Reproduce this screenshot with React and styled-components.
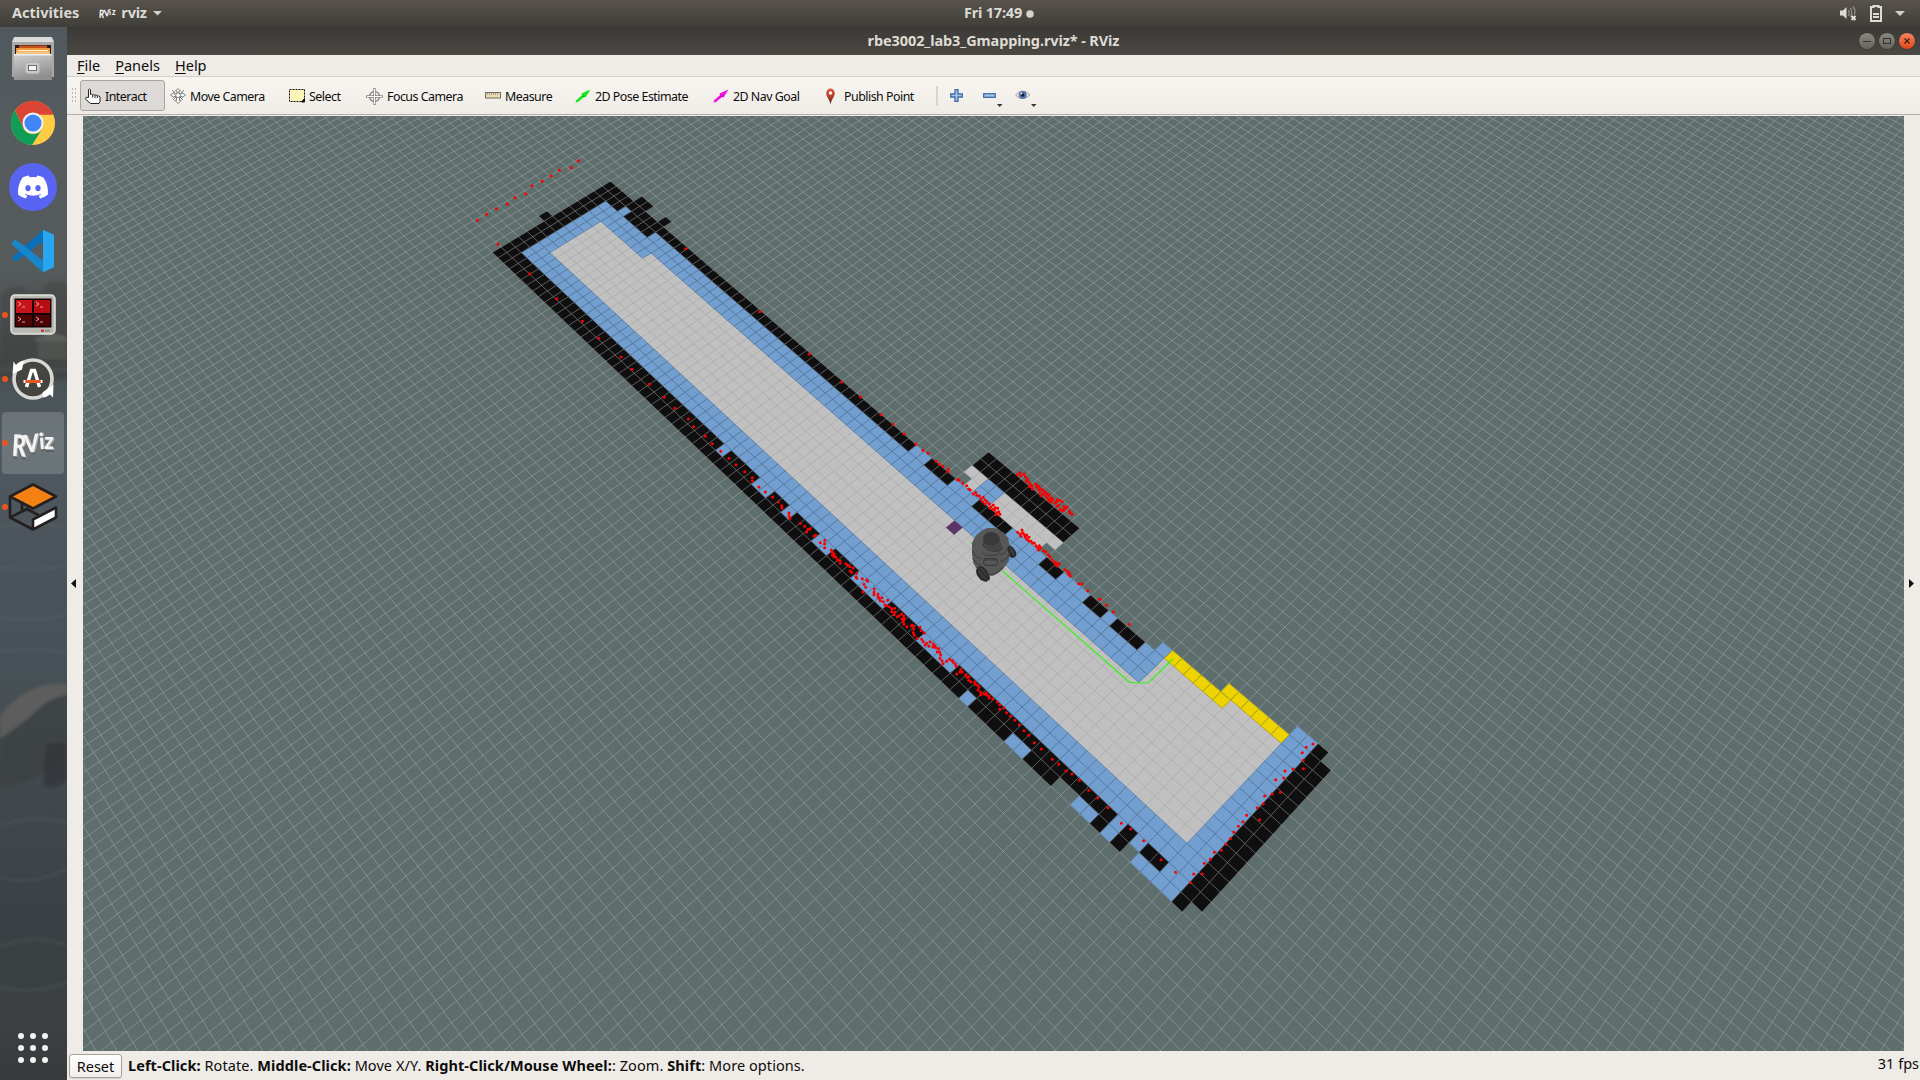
import React from "react";
import styled, { createGlobalStyle } from "styled-components";

/* ------------------------------------------------------------------ */
/* Ground plane camera                                                  */
/* ------------------------------------------------------------------ */

const VIEW = { x: 83, y: 116, w: 1821, h: 935 };
const CAM = {
  pitch: 1.07464,
  yaw: 0.792847,
  cell: 0.010761,
  ox: -0.420432,
  oy: 0.502174,
  f: 1128.854,
  cx: 993.5,
  cy: 583.5,
};

// map cell (u along the corridor, v across it) -> screen
const project = (u, v) => {
  const { pitch, yaw, cell, ox, oy, f, cx, cy } = CAM;
  const r = ox + cell * (u * Math.cos(yaw) - v * Math.sin(yaw));
  const d = oy + cell * (-u * Math.sin(yaw) - v * Math.cos(yaw));
  const w = 1 + d * Math.cos(pitch);
  return [cx + (f * r) / w, cy - (f * d * Math.sin(pitch)) / w];
};

// screen -> map cell
const unproject = (x, y) => {
  const { pitch, yaw, cell, ox, oy, f, cx, cy } = CAM;
  const X = x - cx;
  const Y = y - cy;
  const d = -Y / (f * Math.sin(pitch) + Y * Math.cos(pitch));
  const r = (X * (1 + d * Math.cos(pitch))) / f;
  const a = (r - ox) / cell;
  const b = (d - oy) / cell;
  return [
    a * Math.cos(yaw) - b * Math.sin(yaw),
    -a * Math.sin(yaw) - b * Math.cos(yaw),
  ];
};

const n1 = (n) => n.toFixed(1);

const edges = [
  [[VIEW.x, VIEW.y], [VIEW.x + VIEW.w, VIEW.y]],
  [[VIEW.x + VIEW.w, VIEW.y], [VIEW.x + VIEW.w, VIEW.y + VIEW.h]],
  [[VIEW.x + VIEW.w, VIEW.y + VIEW.h], [VIEW.x, VIEW.y + VIEW.h]],
  [[VIEW.x, VIEW.y + VIEW.h], [VIEW.x, VIEW.y]],
];

// crossing of a grid line (axis 0: u = k, axis 1: v = k) with the view border
const crossings = (axis, k) => {
  const hits = [];
  edges.forEach(([a, b]) => {
    const g = (t) =>
      unproject(a[0] + (b[0] - a[0]) * t, a[1] + (b[1] - a[1]) * t)[axis] - k;
    let lo = 0;
    let hi = 1;
    const gl = g(0);
    if (gl * g(1) > 0) return;
    for (let i = 0; i < 28; i++) {
      const m = (lo + hi) / 2;
      if (g(m) * gl > 0) lo = m;
      else hi = m;
    }
    hits.push([a[0] + (b[0] - a[0]) * lo, a[1] + (b[1] - a[1]) * lo]);
  });
  return hits;
};

const gridPath = (() => {
  let d = "";
  [[0, -48, 130], [1, -104, 74]].forEach(([axis, from, to]) => {
    for (let k = from; k <= to; k++) {
      const h = crossings(axis, k);
      if (h.length >= 2) {
        d += `M${n1(h[0][0])} ${n1(h[0][1])}L${n1(h[1][0])} ${n1(h[1][1])}`;
      }
    }
  });
  return d;
})();

// [u0, u1, v0, v1]
const cells = (list) =>
  list
    .map(([u0, u1, v0, v1]) =>
      "M" +
      [[u0, v0], [u1, v0], [u1, v1], [u0, v1]]
        .map(([u, v]) => project(u, v).map(n1).join(" "))
        .join("L") +
      "Z"
    )
    .join("");

const FREE = cells([
  [4, 86, 4, 10], [11, 86, 3, 4], [75, 86, 0, 3], [81, 86, -1, 0],
  [51, 53, -2, -1], [52, 53, -1, 0], [55, 62, -2, -1], [55, 61, -1, 0],
]);
const INFLATED = cells([
  [2, 4, 2, 12], [4, 11, 2, 4], [4, 5, 1, 2], [9, 11, 1, 2], [11, 75, 1, 3],
  [4, 88, 10, 12],
  [46, 48, 0, 1], [51, 54, 0, 1], [58, 62, 0, 1], [64, 67, 0, 1],
  [69, 70, 0, 1], [73, 75, 0, 1], [74, 75, -1, 0],
  [53, 55, -2, 0],
  [86, 88, -3, 14],
  [34, 35, 12, 13], [39, 41, 12, 13], [43, 44, 12, 13], [47, 49, 12, 13],
  [52, 56, 12, 13], [60, 64, 12, 13], [81, 82, 12, 13], [83, 84, 12, 13],
  [66, 67, 13, 14], [71, 73, 13, 14], [78, 80, 13, 14], [81, 82, 13, 14],
  [84, 86, 13, 14],
]);
const WALL = cells([
  [0, 2, 0, 14], [2, 4, 0, 2], [4, 46, 0, 1], [5, 9, 1, 2],
  [4, 6, -1, 0], [8, 9, -1, 0], [-1, 0, 7, 8],
  [2, 66, 13, 14], [2, 34, 12, 13], [35, 39, 12, 13], [41, 43, 12, 13],
  [44, 47, 12, 13], [49, 52, 12, 13], [56, 60, 12, 13], [64, 81, 12, 13],
  [67, 71, 13, 14], [73, 76, 13, 14], [80, 81, 13, 14],
  [82, 83, 12, 14], [84, 86, 12, 13],
  [48, 51, 0, 1], [54, 58, 0, 1], [62, 64, 0, 1], [67, 69, 0, 1],
  [70, 73, 0, 1],
  [51, 62, -4, -2],
  [88, 89, -3, 14], [89, 90, -2, 13],
]);
const FRONTIER = cells([[75, 81, -1, 0], [80, 86, -2, -1]]);
const TARGET = cells([[54, 55, 3, 4]]);

/* ------------------------------------------------------------------ */
/* Laser scan points: [origin x, origin y, "x y x y ..." in 1/3 px]     */
/* ------------------------------------------------------------------ */

const SCAN = [
  [460, 120, "52 301 80 283 109 266 142 253 165 233 198 221 216 197 247 184 273 168 298 151 334 143 355 122 114 373 210 461 290 536 367 604 416 655 483 711 516 748 568 793 613 832 645 865 685 897 701 920 736 949 677 386 899 575 1047 703 1145 786"],
  [700, 380, "425 6 482 51 543 104 579 133 613 162 647 193 669 211 684 220 708 244 718 253 729 259 745 268 744 275 772 299 777 301 788 310 800 317 806 327 811 330 820 342 827 337 830 346 838 348 843 357 850 352 848 365 856 360 862 366 868 372 873 380 880 375 886 383 890 398 884 391 893 385 900 403 870 385 855 372 880 388 888 404 896 395"],
  [940, 430, "232 134 240 128 243 137 252 132 256 140 262 147 259 153 266 156 271 163 269 170 277 178 276 169 286 162 291 166 290 172 297 170 297 179 304 178 300 188 309 181 303 198 310 192 316 186 318 198 322 192 322 204 328 196 330 207 327 212 335 204 333 216 339 209 345 219 352 209 350 216 360 211 367 215 356 226 350 229 372 229 361 239 366 241 374 236 370 243 381 232 388 243 391 249 396 253"],
  [700, 380, "953 457 960 462 966 450 968 458 963 469 972 463 976 470 980 465 980 477 987 472 986 482 993 484 998 490 1003 489 1008 497 1013 504 1018 497 1022 503 1016 510 1030 512 1037 515 1045 524 1050 530 1056 540 1064 546 1068 552 1074 549 1078 552 1070 558 1095 569 1103 574 1108 580 1111 588 1106 583 1136 611 1146 612 1163 632 1198 658"],
  [1050, 580, "151 58 169 76 190 96 238 133"],
  [700, 380, "15 168 37 191 62 214 87 235 108 254 134 275 157 293 157 303 177 321 196 336 218 351 235 366 245 377 246 384 267 399 267 408 270 415 301 430 314 439 324 448 330 447 320 456 342 468 347 466 361 488 374 481 374 491 374 503 394 510 397 516 397 525 403 522 408 532 402 530 413 540 420 542 421 550 438 551 443 556 450 560 460 564 450 573 455 577 470 580 468 590 470 595 487 596 500 600 503 604 492 613 497 622 489 636 523 627 522 637 522 644 534 642 534 650 537 655 546 653 541 662 550 665 563 661 555 675 560 677 568 680 575 687 584 685 575 695 585 697 582 704 592 710 597 707 605 702 612 709 606 717 613 717 610 725 612 733 621 740 637 735 641 739 634 738 660 742 641 748 664 752 640 758 673 759 643 766 652 775 665 778 670 785 690 785 680 790 687 799 675 795 700 792 705 797 708 803 699 801 716 806 712 815 719 817 722 825 720 835 726 842 729 851 740 844 749 838 757 842 760 847 766 853 769 859 782 868 780 876 787 876 770 882 797 884 801 892 807 890 806 901 813 906 824 905 825 913 833 916 837 922 834 930 842 936 842 944 852 942 859 939 860 945 867 948 868 954 878 957 892 966 900 975 899 988 912 984 920 998 931 1009 944 1021 958 1034 972 1052 986 1066 1003 1088 1024 1107"],
  [1050, 580, "7 538 26 553 48 573 66 582 88 601 116 631 143 654 174 683 214 730 242 747 281 782 333 839 377 877 789 492 769 502 757 518 760 541 760 566 729 567 705 573 701 594 677 599 691 637 666 642 644 648 640 671 622 683 629 719 590 706 579 725 565 739 551 756 541 776 528 793 514 811 493 817 481 838 463 850 457 882 431 882 422 908"],
];

const scanPath = SCAN.map(([ox, oy, s]) => {
  const n = s.split(" ").map(Number);
  let d = "";
  for (let i = 0; i < n.length; i += 2) {
    d += `M${n1(ox + n[i] / 3)} ${n1(oy + n[i + 1] / 3)}h0`;
  }
  return d;
}).join("");

/* ------------------------------------------------------------------ */
/* Styles                                                               */
/* ------------------------------------------------------------------ */

const GlobalStyle = createGlobalStyle`
  * { box-sizing: border-box; }
  body { margin: 0; overflow: hidden; background: #efebe7; }
`;

const Desktop = styled.div`
  width: 1920px;
  height: 1080px;
  display: flex;
  flex-direction: column;
  font-family: "Noto Sans", "Open Sans", sans-serif;
  font-size: 14.5px;
  color: #0c0c0c;
`;

const TopBar = styled.header`
  height: 27px;
  flex: none;
  display: grid;
  grid-template-columns: 1fr auto 1fr;
  align-items: center;
  background: linear-gradient(#58534c, #3f3e39);
  color: #dcdad5;
  font-weight: 700;
`;

const BarGroup = styled.div`
  display: flex;
  align-items: center;
  height: 27px;
  gap: ${(p) => p.$gap || 0}px;
  justify-content: ${(p) => (p.$end ? "flex-end" : "flex-start")};
  padding: ${(p) => p.$pad || "0"};
`;

const BarText = styled.span`
  line-height: 24px;
  padding-bottom: 3px;
  letter-spacing: ${(p) => p.$ls || 0}px;
`;

const Body = styled.div`
  flex: 1;
  min-height: 0;
  display: flex;
`;

const Dock = styled.nav`
  position: relative;
  width: 67px;
  flex: none;
  display: flex;
  flex-direction: column;
  overflow: hidden;
  background: linear-gradient(
    #50595e 0,
    #565c5e 130px,
    #555a5b 240px,
    #4f5353 290px,
    #444947 335px,
    #4a5357 362px,
    #505a60 410px,
    #4b545a 520px,
    #485157 640px,
    #42494c 760px,
    #3a4043 900px,
    #3c4042 1000px,
    #373a3b 1053px
  );
`;

const DockScene = styled.svg`
  position: absolute;
  left: 0;
  top: 0;
`;

const DockItem = styled.div`
  position: relative;
  height: 64px;
  flex: none;
  display: flex;
  align-items: center;
  padding-left: 2px;
`;

const DockTile = styled.div`
  width: 62px;
  height: 62px;
  display: flex;
  align-items: center;
  justify-content: center;
  border-radius: 4px;
  background: ${(p) => (p.$active ? "rgba(255,255,255,0.17)" : "transparent")};
`;

const RunDot = styled.span`
  position: absolute;
  left: 2px;
  top: 29px;
  width: 6px;
  height: 6px;
  border-radius: 50%;
  background: #e95420;
`;

const AppGrid = styled.div`
  position: relative;
  margin-top: auto;
  padding: 0 0 17px 18px;
  display: grid;
  grid-template-columns: repeat(3, 6px);
  gap: 6px;
`;

const GridDot = styled.i`
  width: 6px;
  height: 6px;
  border-radius: 50%;
  background: #f4f4f4;
`;

const Window = styled.main`
  flex: 1;
  min-width: 0;
  display: flex;
  flex-direction: column;
  background: #efebe7;
`;

const TitleBar = styled.div`
  height: 28px;
  flex: none;
  display: grid;
  grid-template-columns: 1fr auto 1fr;
  align-items: center;
  background: linear-gradient(#3b3a36, #4a4843);
  color: #dfdbd2;
  font-weight: 700;
`;

const WindowButtons = styled.div`
  display: flex;
  justify-content: flex-end;
  gap: 4px;
  padding-right: 5px;
`;

const WindowButton = styled.span`
  width: 16px;
  height: 16px;
  border-radius: 50%;
  display: grid;
  place-items: center;
  background: ${(p) =>
    p.$close
      ? "linear-gradient(#f4845f, #df4a16)"
      : "linear-gradient(#8a8880, #67655e)"};
  box-shadow: 0 0 0 0.5px #2c2b28;
`;

const MenuBar = styled.div`
  height: 22px;
  flex: none;
  display: flex;
  align-items: flex-start;
  gap: 15px;
  padding-left: 10px;
  line-height: 20px;
  border-bottom: 1px solid #d2cec9;

  u {
    text-underline-offset: 2px;
    text-decoration-thickness: 1px;
  }
`;

const ToolBar = styled.div`
  height: 38px;
  flex: none;
  display: flex;
  align-items: center;
  padding: 0 0 0 4px;
  background: linear-gradient(#f9f6f1, #efece7);
  border-bottom: 1px solid #b5aea7;
`;

const Handle = styled.span`
  width: 5px;
  height: 17px;
  margin-right: 4px;
  background-image: radial-gradient(circle, #bdb8b1 0.7px, transparent 1px);
  background-size: 3px 4px;
`;

const ToolButton = styled.div`
  width: ${(p) => p.$w}px;
  height: 31px;
  flex: none;
  display: flex;
  align-items: center;
  gap: 4px;
  padding: 1px 0 0 4px;
  font-size: 12.4px;
  letter-spacing: -0.5px;
  white-space: nowrap;
  border: 1px solid ${(p) => (p.$on ? "#aaa49e" : "transparent")};
  border-radius: 3px;
  background: ${(p) => (p.$on ? "#dcd9d6" : "transparent")};
`;

const Separator = styled.span`
  width: 2px;
  height: 20px;
  margin-left: 3px;
  background: #d8d4cf;
`;

const IconButton = styled.span`
  display: flex;
  margin-left: ${(p) => p.$ml}px;
`;

const Center = styled.div`
  height: 936px;
  flex: none;
  display: flex;
  padding-top: 1px;
`;

const SideHandle = styled.div`
  width: 16px;
  flex: none;
  display: grid;
  place-items: center start;
  padding-left: ${(p) => p.$pl}px;
`;

const Viewport = styled.div`
  width: 1821px;
  height: 935px;
  flex: none;
  overflow: hidden;
  background: #5e6e6d;

  svg {
    display: block;
  }
`;

const StatusBar = styled.footer`
  flex: 1;
  display: flex;
  align-items: flex-start;
  padding: 3px 1px 0 2px;
  white-space: nowrap;
`;

const ResetButton = styled.span`
  width: 53px;
  height: 24px;
  margin-right: 6px;
  text-align: center;
  line-height: 22px;
  border: 1px solid #a8a29b;
  border-radius: 3px;
  background: linear-gradient(#ffffff, #f1efec);
  box-shadow: 0 1px 1px rgba(0, 0, 0, 0.12);
`;

const Hint = styled.span`
  flex: 1;
  line-height: 23px;
  letter-spacing: 0.075px;
`;

const Fps = styled.span`
  line-height: 18px;
`;

/* ------------------------------------------------------------------ */
/* Icons                                                                */
/* ------------------------------------------------------------------ */

const FilesIcon = () => (
  <svg width="44" height="46" viewBox="0 0 44 46">
    <defs>
      <linearGradient id="fl" x1="0" y1="0" x2="0.3" y2="1">
        <stop offset="0" stopColor="#cfcfcf" />
        <stop offset="1" stopColor="#8f8f8f" />
      </linearGradient>
    </defs>
    <path d="M3 1h38l2 4v36H1V5z" fill="#a9a9a9" />
    <path d="M3.500 1h37l2 5h-41z" fill="#dcdcdc" />
    <path d="M4 9h36v10H4z" fill="#2c1d14" />
    <path d="M8 9.500h28v3H8z" fill="#c8501c" />
    <path d="M5 12h34v7H5z" fill="#ee9a3c" />
    <path d="M7 14h30v1.300H7z" fill="#fff0d8" />
    <path d="M5 16h34v3H5z" fill="#f3c684" />
    <path d="M3 18h38v26H3z" fill="url(#fl)" />
    <path d="M3 18h38v1.400H3z" fill="#ececec" />
    <rect x="14.500" y="26.500" width="14" height="11" rx="2.500" fill="#c9c9c9" stroke="#b2b2b2" />
    <rect x="17.500" y="29.500" width="8" height="5" fill="#f4f4f4" stroke="#6c6c6c" />
  </svg>
);

const ChromeIcon = () => (
  <svg width="46" height="46" viewBox="-24 -24 48 48">
    <circle r="23" fill="#fc4" />
    <path d="M-18.800 -13.200A23 23 0 0 1 21.500 -8.500H0L-10 5.700z" fill="#db4437" />
    <path d="M-18.800 -13.200A23 23 0 0 0 -1 23L10 5.700A11.500 11.500 0 0 1 -10 5.700z" fill="#0f9d58" />
    <circle r="11" fill="#f2f2f2" />
    <circle r="8.900" fill="#4285f4" />
  </svg>
);

const DiscordIcon = () => (
  <svg width="48" height="48" viewBox="0 0 48 48">
    <circle cx="24" cy="24" r="24" fill="#5865f2" />
    <path
      transform="translate(9 9) scale(1.25)"
      d="M20.317 4.370a19.791 19.791 0 0 0-4.885-1.515.074.074 0 0 0-.079.037c-.21.375-.444.864-.608 1.250a18.270 18.270 0 0 0-5.487 0 12.640 12.640 0 0 0-.617-1.250.077.077 0 0 0-.079-.037A19.736 19.736 0 0 0 3.677 4.370a.070.070 0 0 0-.032.027C.533 9.046-.320 13.580.099 18.058a.082.082 0 0 0 .031.057 19.900 19.900 0 0 0 5.993 3.030.078.078 0 0 0 .084-.028c.462-.630.874-1.295 1.226-1.994a.076.076 0 0 0-.041-.106 13.107 13.107 0 0 1-1.872-.892.077.077 0 0 1-.008-.128c.126-.094.252-.192.372-.292a.074.074 0 0 1 .077-.010c3.928 1.793 8.180 1.793 12.062 0a.074.074 0 0 1 .078.010c.120.098.246.198.373.292a.077.077 0 0 1-.006.127 12.299 12.299 0 0 1-1.873.892.077.077 0 0 0-.041.107c.360.698.772 1.362 1.225 1.993a.076.076 0 0 0 .084.028 19.839 19.839 0 0 0 6.002-3.030.077.077 0 0 0 .032-.054c.500-5.177-.838-9.674-3.549-13.660a.061.061 0 0 0-.031-.030zM8.020 15.330c-1.183 0-2.157-1.085-2.157-2.419 0-1.333.956-2.419 2.157-2.419 1.210 0 2.176 1.096 2.157 2.420 0 1.333-.956 2.418-2.157 2.418zm7.975 0c-1.183 0-2.157-1.085-2.157-2.419 0-1.333.955-2.419 2.157-2.419 1.210 0 2.176 1.096 2.157 2.420 0 1.333-.946 2.418-2.157 2.418z"
      fill="#fff"
    />
  </svg>
);

const CodeIcon = () => (
  <svg width="44" height="44" viewBox="0 0 44 44">
    <path d="M1 28.500L32 .8v11.500L5 32.500 1 30z" fill="#0b70b8" />
    <path d="M1 13.500L4.500 10.500 32 31.500V43.200L1 15.500z" fill="#1787cc" />
    <path d="M32 .8l11 5v32.400l-11 5z" fill="#2aa5ef" />
  </svg>
);

const TerminatorIcon = () => (
  <svg width="46" height="42" viewBox="0 0 46 42">
    <rect x="1" y="1" width="44" height="39" rx="4" fill="#b9b9b3" stroke="#e4e4df" strokeWidth="1.500" />
    <rect x="4.500" y="4.500" width="37" height="29" fill="#150404" />
    <path d="M6 6h16v13H6z" fill="#c5141c" />
    <path d="M24 6h16v13H24z" fill="#b80d14" />
    <path d="M6 21h16v11H6zM24 21h16v11H24z" fill="#4d0406" />
    <path
      d="M8 8l3 2-3 2M12 13h3M26 8l3 2-3 2M30 13h3M8 23l3 2-3 2M12 28h3M26 23l3 2-3 2M30 28h3"
      stroke="#f0b0b0"
      strokeWidth="0.900"
      fill="none"
    />
    <path d="M31 36.700h3" stroke="#e01818" strokeWidth="2" />
    <path d="M35 36.700h5" stroke="#8d8d88" strokeWidth="2" />
  </svg>
);

const UpdaterIcon = () => (
  <svg width="46" height="46" viewBox="-23 -23 46 46">
    <circle r="19" fill="#454440" stroke="#d8d8d4" strokeWidth="3.600" />
    <path d="M-19.500 -17.500L-17 -14Q-14 -18 -9 -18.500L-11 -9.500L-20.500 -5z" fill="#fff" />
    <path d="M20.500 5.500L20 18.500 17 15.500 Q14 18 10 18.500L9.500 13.500z" fill="#fff" />
    <path d="M-6.500 8L-1.500 -8.500H1.500L6.500 8" fill="none" stroke="#fff" strokeWidth="3.400" />
    <path d="M-9.500 2.500h4M5.500 2.500h4" stroke="#fff" strokeWidth="3" />
    <path d="M-6.500 2.500H6.500" stroke="#e95420" strokeWidth="3" strokeLinecap="round" />
  </svg>
);

const RvizGlyph = styled.span`
  display: flex;
  align-items: baseline;
  font-family: "Lato", "Noto Sans", sans-serif;
  font-weight: 900;
  font-size: ${(p) => 21.5 * p.$k}px;
  line-height: 1;
  color: #f4f4f4;
  transform: translateY(${(p) => (p.$k < 1 ? 0 : 1)}px) scaleY(1.15);
  text-shadow: ${(p) =>
    p.$k < 1 ? "none" : "1.5px 0.5px 0 #a8a8a8, 1px 2px 1px #5d5d5d"};

  span {
    display: inline-block;
  }
  span:nth-child(1) { transform: translateY(${(p) => 2 * p.$k}px) rotate(4deg) scaleY(1.2); }
  span:nth-child(2) { transform: rotate(-6deg); margin-left: ${(p) => -1.5 * p.$k}px; }
  span:nth-child(3) { transform: translateY(${(p) => -2 * p.$k}px) rotate(-5deg) scale(0.9); margin-left: ${(p) => -1 * p.$k}px; }
  span:nth-child(4) { transform: translateY(${(p) => -2 * p.$k}px) scale(0.95); }
`;

const RvizIcon = ({ k }) => (
  <RvizGlyph $k={k}>
    <span>R</span>
    <span>V</span>
    <span>i</span>
    <span>z</span>
  </RvizGlyph>
);

const BoxIcon = () => (
  <svg width="50" height="48" viewBox="0 0 50 48">
    <g stroke="#241f20" strokeWidth="2.600" strokeLinejoin="round" fill="none">
      <path d="M2 13.500V34.500L25 46.500" />
      <path d="M2 34.500L19 26L31 32.500" />
      <path d="M14 20V28.500" />
      <path d="M25 1.500L48 13.500 25 25.500 2 13.500z" fill="#f58113" />
      <path d="M25 46.500L48 34.500V24.500L25 36.500z" fill="#fff" />
    </g>
  </svg>
);

const Caret = ({ w = 9, color = "#d3d1cc" }) => (
  <svg width={w} height={w / 2} viewBox="0 0 10 5">
    <path d="M0 0h10L5 5z" fill={color} />
  </svg>
);

const SpeakerIcon = () => (
  <svg width="17" height="17" viewBox="0 0 17 17">
    <path d="M0 5.500h3L6.500 2v12L3 10.500H0z" fill="#dedcd7" />
    <path d="M8.500 5q1.500 3 0 6M10.500 3q2.600 5 0 9M13 1.500q3 4 1.500 8" fill="none" stroke="#8e8b85" strokeWidth="1.400" />
    <path d="M11.500 11l4 4M15.500 11l-4 4" stroke="#e8e6e1" strokeWidth="1.800" />
  </svg>
);

const BatteryIcon = () => (
  <svg width="12" height="17" viewBox="0 0 12 17">
    <path d="M3.500 2V1h5v1H11v14H1V2z" fill="none" stroke="#dedcd7" strokeWidth="2" />
    <path d="M3 9h6M3 12h6" stroke="#dedcd7" strokeWidth="1.800" />
  </svg>
);

const HandIcon = () => (
  <svg width="16" height="16" viewBox="0 0 16 16">
    <path
      d="M3.500 9.500V1.700q1-1.400 2 0V6.500q1-.8 2.200.3q1-.6 2.200.4q1.200-.6 2.300.6q1.800-.3 2.800 1v4.700l-1 2H5.500L1 11.500Q0 9.800 1.200 9.300z"
      fill="#fff"
      stroke="#222"
    />
    <path d="M7.700 7v2.500M10 7.500V10M12.300 8v2" stroke="#222" />
  </svg>
);

const MoveIcon = () => (
  <svg width="16" height="16" viewBox="0 0 16 16" fill="#fff" stroke="#777" strokeWidth="0.900">
    <path d="M8 .5L10.500 3H9v3h3V4.500L15.500 7 12 9.500V8.500H9.500v4H11L8 15.500 5 12.500h1.500v-4H4v1L.5 7 4 4.500V6h3V3H5.500z" />
    <circle cx="8" cy="7.300" r="2.300" />
    <path d="M2 2l3 3M14 2l-3 3M3 12l3-3M13 12l-3-3" />
  </svg>
);

const SelectIcon = () => (
  <svg width="16" height="14" viewBox="0 0 16 14">
    <rect x="0.500" y="0.500" width="15" height="12" fill="#fdf6b8" stroke="#111" strokeDasharray="2 1" />
    <path d="M15.500 9.500v3.500h-3z" fill="#111" stroke="#111" />
  </svg>
);

const FocusIcon = () => (
  <svg width="17" height="17" viewBox="0 0 17 17" fill="none" stroke="#8a8a8a">
    <circle cx="8.500" cy="8.500" r="5" strokeWidth="1.400" />
    <circle cx="8.500" cy="8.500" r="2" />
    <path d="M8.500 0v17M0 8.500h17" strokeWidth="2.400" stroke="#8a8a8a" />
    <path d="M8.500 1v15M1 8.500h15" strokeWidth="1" stroke="#fff" />
  </svg>
);

const RulerIcon = () => (
  <svg width="16" height="8" viewBox="0 0 16 8">
    <rect x="0.500" y="0.500" width="15" height="5.500" fill="#eadfb4" stroke="#6f6b5e" />
    <path d="M2.500 1v2M4.500 1v2M6.500 1v2M8.500 1v2M10.500 1v2M12.500 1v2" stroke="#8b8468" strokeWidth="0.700" />
  </svg>
);

const ArrowIcon = ({ color, dark }) => (
  <svg width="16" height="14" viewBox="0 0 16 14">
    <path d="M.5 13.500L1 11.500 7 6 6.500 4.500 15.500.5 10.500 8.500 9 8 3 13z" fill={color} />
    <path d="M7.500 7L9.500 6.500 9 8z" fill={dark} />
  </svg>
);

const PinIcon = () => (
  <svg width="16" height="17" viewBox="0 0 16 17">
    <defs>
      <linearGradient id="pin" x1="0" y1="0" x2="0" y2="1">
        <stop offset="0" stopColor="#e2533a" />
        <stop offset="0.500" stopColor="#b8402a" />
        <stop offset="1" stopColor="#3c2a22" />
      </linearGradient>
    </defs>
    <path d="M6.500.5a4.300 4.800 0 0 1 4.300 4.800c0 3.700-3.300 5.700-4.300 11.200-1-5.500-4.300-7.500-4.300-11.200a4.300 4.800 0 0 1 4.300-4.800z" fill="url(#pin)" />
    <circle cx="6.500" cy="5" r="1.700" fill="#fff" />
  </svg>
);

const PlusIcon = () => (
  <svg width="13" height="13" viewBox="0 0 13 13">
    <path d="M5 .7h3V5h4.300v3H8v4.300H5V8H.7V5H5z" fill="#a9c4e4" stroke="#3b6cab" strokeWidth="1.300" />
  </svg>
);

const MinusIcon = () => (
  <svg width="20" height="23" viewBox="0 0 20 23">
    <rect x="0.700" y="9.700" width="11.500" height="3.600" fill="#a9c4e4" stroke="#3b6cab" strokeWidth="1.300" />
    <path d="M14 20h5.500L16.700 23z" fill="#333" />
  </svg>
);

const EyeIcon = () => (
  <svg width="22" height="23" viewBox="0 0 22 23">
    <path d="M.5 11Q7.500 3 15 11 7.500 18 .5 11z" fill="#e9e7e4" stroke="#aaa69f" />
    <circle cx="7.700" cy="11" r="4" fill="#5a74b8" />
    <circle cx="7.700" cy="11" r="1.800" fill="#16182c" />
    <circle cx="6.300" cy="9.500" r="1" fill="#dfe6f7" />
    <path d="M16 20h5.500L18.700 23z" fill="#333" />
  </svg>
);

/* ------------------------------------------------------------------ */
/* 3D scene                                                             */
/* ------------------------------------------------------------------ */

const Robot = () => (
  <g transform="translate(940 430) scale(0.33333)">
    <path d="M108 420l10 -8 18 4 12 18 2 14 -12 8 -16 -6 -12 -16z" fill="#2b2b2b" />
    <path d="M200 350l8 -4 8 4 12 18 0 10 -10 6 -16 -6z" fill="#2b2b2b" />
    <path
      d="M96 340l6 -14 8 -12 18 -14 14 -6 18 0 14 4 18 10 12 16 5 22 0 28 -3 20 -16 22 -14 12 -16 9 -14 0 -22 -10 -14 -10 -10 -18 -4 -26z"
      fill="#575757"
    />
    <path
      d="M98 362q10 26 30 24M98 384q10 20 26 20M206 348q-6 24 -26 26M208 372q-8 20 -28 22M132 390h40M128 366l8 10h34l10 -8M112 410q16 24 42 24 20 -4 34 -22"
      fill="none"
      stroke="#3d3d3d"
      strokeWidth="3"
    />
    <path d="M134 386h36l4 12 -6 8h-32l-6 -8z" fill="none" stroke="#333" strokeWidth="3" />
    <path d="M128 330q2 24 24 30 26 6 36 -4l-10 -30z" fill="#454545" />
    <path d="M128 340q4 20 30 24 20 2 30 -8" fill="none" stroke="#2e2e2e" strokeWidth="2.500" />
    <ellipse cx="154" cy="326" rx="25" ry="20" fill="#393939" />
    <ellipse cx="128" cy="430" rx="14" ry="22" transform="rotate(-32 128 430)" fill="#303030" stroke="#232323" strokeWidth="2" />
    <path d="M116 424l22 24M122 414l20 22" stroke="#474747" strokeWidth="3" />
    <ellipse cx="216" cy="365" rx="9" ry="17" transform="rotate(-32 216 365)" fill="#303030" stroke="#232323" strokeWidth="2" />
    <path d="M210 352l12 22" stroke="#4a4a4a" strokeWidth="3" />
  </g>
);

const LAYERS = [
  { id: "free", d: FREE, fill: "#c0c0c0", line: "#adadad", alpha: 0.9 },
  { id: "inflated", d: INFLATED, fill: "#729fcf", line: "#4f7396", alpha: 0.85 },
  { id: "frontier", d: FRONTIER, fill: "#edd400", line: "#8f8420", alpha: 0.8 },
  { id: "wall", d: WALL, fill: "#0f0f0f", line: "#77777a", alpha: 0.75 },
];

const Scene = () => (
  <svg width={VIEW.w} height={VIEW.h} viewBox={`${VIEW.x} ${VIEW.y} ${VIEW.w} ${VIEW.h}`}>
    <defs>
      <path id="grid" d={gridPath} />
      {LAYERS.map((l) => (
        <clipPath id={`clip-${l.id}`} key={l.id}>
          <path d={l.d} />
        </clipPath>
      ))}
    </defs>
    <use href="#grid" fill="none" stroke="#a0a0a4" strokeOpacity="0.6" />
    {LAYERS.map((l) => (
      <g key={l.id}>
        <path d={l.d} fill={l.fill} />
        <g clipPath={`url(#clip-${l.id})`}>
          <use href="#grid" fill="none" stroke={l.line} strokeOpacity={l.alpha} />
        </g>
      </g>
    ))}
    <path d={TARGET} fill="#5c3566" />
    <path
      d="M971 542.500L974 545L1002 570.500L1129.500 682.300L1139.500 683L1148.500 682.600L1173 658.700"
      fill="none"
      stroke="#3cf01e"
      strokeWidth="1.200"
    />
    <path d={scanPath} fill="none" stroke="#fa0000" strokeWidth="3.100" strokeLinecap="round" />
    <Robot />
  </svg>
);

/* ------------------------------------------------------------------ */
/* Data                                                                 */
/* ------------------------------------------------------------------ */

const DOCK = [
  { icon: <FilesIcon /> },
  { icon: <ChromeIcon /> },
  { icon: <DiscordIcon /> },
  { icon: <CodeIcon /> },
  { icon: <TerminatorIcon />, running: true },
  { icon: <UpdaterIcon />, running: true },
  { icon: <RvizIcon k={1} />, running: true, active: true },
  { icon: <BoxIcon />, running: true },
];

const TOOLS = [
  { label: "Interact", icon: <HandIcon />, w: 85, on: true },
  { label: "Move Camera", icon: <MoveIcon />, w: 119 },
  { label: "Select", icon: <SelectIcon />, w: 77 },
  { label: "Focus Camera", icon: <FocusIcon />, w: 119 },
  { label: "Measure", icon: <RulerIcon />, w: 90 },
  { label: "2D Pose Estimate", icon: <ArrowIcon color="#12e81c" dark="#0a5a10" />, w: 138 },
  { label: "2D Nav Goal", icon: <ArrowIcon color="#f010e0" dark="#6a0864" />, w: 111 },
  { label: "Publish Point", icon: <PinIcon />, w: 114 },
];

const MENUS = ["File", "Panels", "Help"];

export default function App() {
  return (
    <Desktop>
      <GlobalStyle />
      <TopBar>
        <BarGroup $pad="0 0 0 12px">
          <BarGroup $pad="0 20px 0 0"><BarText>Activities</BarText></BarGroup>
          <BarGroup $gap={6}>
            <RvizIcon k={0.38} />
            <BarText $ls={-0.2}>rviz</BarText>
            <Caret w={9} />
          </BarGroup>
        </BarGroup>
        <BarGroup $gap={4} $pad="0 0 0 78px">
          <BarText $ls={-0.2}>Fri 17:49</BarText>
          <svg width="8" height="8">
            <circle cx="4" cy="4" r="3.800" fill="#d3d1cc" />
          </svg>
        </BarGroup>
        <BarGroup $end $pad="0 15px 1px 0" $gap={13}>
          <SpeakerIcon />
          <BatteryIcon />
          <Caret w={10} />
        </BarGroup>
      </TopBar>
      <Body>
        <Dock>
          <DockScene width="67" height="1053">
            <defs>
              <filter id="soft" x="-20%" y="-20%" width="140%" height="140%">
                <feGaussianBlur stdDeviation="1.500" />
              </filter>
            </defs>
            <g filter="url(#soft)">
              <path d="M0 270q14 -16 26 -8t22 -6q12 -4 20 2v82H0z" fill="#40433e" opacity="0.45" />
              <path d="M35 312l16 -7 16 5v4H35z" fill="#666a66" opacity="0.7" />
              <path d="M38 314h29v18H38z" fill="#4f5350" />
              <path d="M0 345h67v6H0z" fill="#3a3e3c" opacity="0.6" />
              <path d="M0 688q22 -26 45 -30 15 -3 22 0v10q-20 4 -38 22l-29 22z" fill="#6a6863" opacity="0.6" />
              <path d="M0 712q26 -16 36 -28 14 -14 31 -16v60q-16 20 -67 34z" fill="#3a3d3e" opacity="0.65" />
              <path d="M46 718q12 -4 21 0v36q-14 10 -24 4z" fill="#2b2e30" opacity="0.5" />
              <path d="M0 500q30 -6 67 0M0 540q30 6 67 -2M0 590q30 6 67 -2M0 625q34 -6 67 2M0 800q30 -14 67 -4M0 850q30 10 67 -8M0 920q30 -14 67 -2M0 960q30 8 67 -4" stroke="#69747a" strokeWidth="3" opacity="0.2" fill="none" />
            </g>
          </DockScene>
          {DOCK.map((item, i) => (
            <DockItem key={i}>
              <DockTile $active={item.active}>{item.icon}</DockTile>
              {item.running && <RunDot />}
            </DockItem>
          ))}
          <AppGrid>
            {Array.from({ length: 9 }, (_, i) => (
              <GridDot key={i} />
            ))}
          </AppGrid>
        </Dock>
        <Window>
          <TitleBar>
            <span />
            <BarText $ls={-0.1}>rbe3002_lab3_Gmapping.rviz* - RViz</BarText>
            <WindowButtons>
              <WindowButton>
                <svg width="8" height="8"><path d="M0 4.500h8" stroke="#33322e" /></svg>
              </WindowButton>
              <WindowButton>
                <svg width="8" height="8"><rect x="0.500" y="1.500" width="7" height="5" fill="none" stroke="#33322e" /></svg>
              </WindowButton>
              <WindowButton $close>
                <svg width="8" height="8"><path d="M1.500 1.500l5 5M6.500 1.500l-5 5" stroke="#44200f" strokeWidth="1.300" /></svg>
              </WindowButton>
            </WindowButtons>
          </TitleBar>
          <MenuBar>
            {MENUS.map((m) => (
              <span key={m}>
                <u>{m[0]}</u>
                {m.slice(1)}
              </span>
            ))}
          </MenuBar>
          <ToolBar>
            <Handle />
            {TOOLS.map((t) => (
              <ToolButton key={t.label} $w={t.w} $on={t.on}>
                {t.icon}
                {t.label}
              </ToolButton>
            ))}
            <Separator />
            <IconButton $ml={12}><PlusIcon /></IconButton>
            <IconButton $ml={20}><MinusIcon /></IconButton>
            <IconButton $ml={12}><EyeIcon /></IconButton>
          </ToolBar>
          <Center>
            <SideHandle $pl={4}>
              <svg width="5" height="9"><path d="M5 0v9L0 4.500z" fill="#111" /></svg>
            </SideHandle>
            <Viewport>
              <Scene />
            </Viewport>
            <SideHandle $pl={5}>
              <svg width="5" height="9"><path d="M0 0v9L5 4.500z" fill="#111" /></svg>
            </SideHandle>
          </Center>
          <StatusBar>
            <ResetButton>Reset</ResetButton>
            <Hint>
              <b>Left-Click:</b> Rotate. <b>Middle-Click:</b> Move X/Y.{" "}
              <b>Right-Click/Mouse Wheel:</b>: Zoom. <b>Shift</b>: More options.
            </Hint>
            <Fps>31 fps</Fps>
          </StatusBar>
        </Window>
      </Body>
    </Desktop>
  );
}
